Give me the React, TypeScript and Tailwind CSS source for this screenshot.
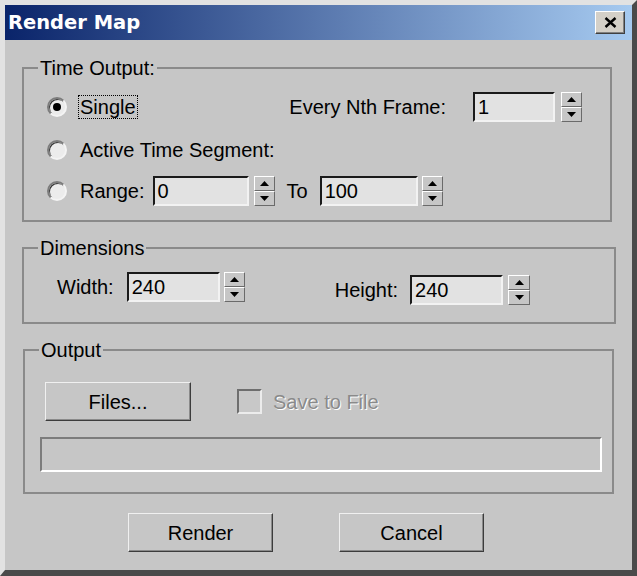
import type { ReactNode } from "react";

function Radio({ checked = false }: { checked?: boolean }) {
  return (
    <span className="ml-[23px] flex h-[20px] w-[20px] shrink-0 items-center justify-center rounded-full border-2 border-t-[#7c7c7c] border-l-[#7c7c7c] border-b-[#f4f4f4] border-r-[#f4f4f4] bg-[#ececec] shadow-[inset_1px_1px_0_#3a3a3a]">
      {checked && <span className="h-[8px] w-[8px] rounded-full bg-black" />}
    </span>
  );
}

function Arrow({ down = false }: { down?: boolean }) {
  return (
    <svg width="9" height="5" viewBox="0 0 9 5">
      <polygon points={down ? "0,0 9,0 4.5,5" : "4.5,0 9,5 0,5"} fill="#000" />
    </svg>
  );
}

function Spinner({ className = "" }: { className?: string }) {
  return (
    <div className={`flex h-[30px] w-[21px] shrink-0 flex-col ${className}`}>
      <div className="flex flex-1 items-center justify-center border border-t-white border-l-white border-b-[#6a6a6a] border-r-[#6a6a6a]">
        <Arrow />
      </div>
      <div className="flex flex-1 items-center justify-center border border-t-white border-l-white border-b-[#6a6a6a] border-r-[#6a6a6a]">
        <Arrow down />
      </div>
    </div>
  );
}

// sunken edit box + spinner pair
function NumField({
  value,
  inputClass,
  spinClass,
}: {
  value: string;
  inputClass: string;
  spinClass: string;
}) {
  return (
    <>
      <div
        className={`flex h-[30px] shrink-0 items-center border-2 border-t-[#1a1a1a] border-l-[#1a1a1a] border-b-[#f2f2f2] border-r-[#f2f2f2] bg-[#e2e2e2] pl-[3px] ${inputClass}`}
      >
        {value}
      </div>
      <Spinner className={spinClass} />
    </>
  );
}

function Button({ label, className = "" }: { label: string; className?: string }) {
  return (
    <button
      type="button"
      className={`flex h-[39px] w-[145px] shrink-0 items-center justify-center border border-t-[#f0f0f0] border-l-[#f0f0f0] border-b-[#3c3c3c] border-r-[#3c3c3c] bg-[#c6c6c6] shadow-[inset_-1px_-1px_0_#8a8a8a] ${className}`}
    >
      {label}
    </button>
  );
}

function Group({
  label,
  className,
  children,
}: {
  label: string;
  className: string;
  children: ReactNode;
}) {
  return (
    <fieldset className={`border-2 border-[#8a8a8a] ${className}`}>
      <legend className="ml-[14px] px-[2px] leading-[20px]">{label}</legend>
      {children}
    </fieldset>
  );
}

export default function App() {
  return (
    <div className="flex h-[576px] w-[637px] flex-col border-t-[5px] border-l-[5px] border-r-[5px] border-b-[6px] border-t-[#e2e2e2] border-l-[#e2e2e2] border-r-[#4a4a4a] border-b-[#4a4a4a] bg-[#c6c6c6] font-['Liberation_Sans',Arial,sans-serif] text-[20px] leading-[20px] text-black">
      {/* title bar */}
      <div className="flex h-[35px] shrink-0 items-center bg-[linear-gradient(to_right,#0a246a,#a6caf0)]">
        <span className="pl-[3px] font-['DejaVu_Sans',sans-serif] text-[19.5px] font-bold text-white">
          Render Map
        </span>
        <div className="mr-[7px] ml-auto flex h-[23px] w-[30px] items-center justify-center border border-t-white border-l-white border-b-[#404040] border-r-[#404040] bg-[#d4d0c8] shadow-[inset_-1px_-1px_0_#808080]">
          <svg width="13" height="11" viewBox="0 0 13 11">
            <path d="M1.5 1 L11.5 10 M11.5 1 L1.5 10" stroke="#000" strokeWidth="2.4" />
          </svg>
        </div>
      </div>

      <div className="flex flex-1 flex-col">
        <Group label="Time Output:" className="mt-[18px] ml-[17px] mr-[20px]">
          <div className="mt-[14px] flex h-[30px] items-center">
            <Radio checked />
            <span className="ml-[11px] border border-dotted border-black px-px leading-[22px]">
              Single
            </span>
            <span className="ml-auto">Every Nth Frame:</span>
            <NumField value="1" inputClass="ml-[27px] w-[82px]" spinClass="ml-[6px] mr-[28px]" />
          </div>
          <div className="mt-[13px] flex h-[30px] items-center">
            <Radio />
            <span className="ml-[13px]">Active Time Segment:</span>
          </div>
          <div className="mt-[11px] mb-[14px] flex h-[30px] items-center">
            <Radio />
            <span className="ml-[13px]">Range:</span>
            <NumField value="0" inputClass="ml-[8px] w-[96px]" spinClass="ml-[5px]" />
            <span className="ml-[12px]">To</span>
            <NumField value="100" inputClass="ml-[12px] w-[98px]" spinClass="ml-[4px]" />
          </div>
        </Group>

        <Group label="Dimensions" className="mt-[16px] ml-[17px] mr-[16px]">
          <div className="mt-[14px] mb-[20px] flex h-[30px] items-center">
            <span className="ml-[33px]">Width:</span>
            <NumField value="240" inputClass="ml-[13px] w-[93px]" spinClass="ml-[4px]" />
            <div className="mt-[6px] ml-[90px] flex items-center">
              <span>Height:</span>
              <NumField value="240" inputClass="ml-[12px] w-[93px]" spinClass="ml-[5px] w-[22px]" />
            </div>
          </div>
        </Group>

        <Group label="Output" className="mt-[16px] ml-[18px] mr-[18px]">
          <div className="mt-[22px] flex h-[39px] items-center">
            <Button label="Files..." className="ml-[20px] w-[146px]" />
            <span className="ml-[46px] h-[25px] w-[25px] shrink-0 border-2 border-t-[#6e6e6e] border-l-[#6e6e6e] border-b-[#ececec] border-r-[#ececec] bg-[#c8c8c8]" />
            <span className="ml-[11px] text-[#8a8a8a] [text-shadow:1px_1px_0_#ffffff]">
              Save to File
            </span>
          </div>
          <div className="mt-[16px] mb-[20px] ml-[15px] mr-[10px] h-[35px] border-2 border-t-[#7c7c7c] border-l-[#7c7c7c] border-b-white border-r-white" />
        </Group>

        <div className="mt-[19px] flex">
          <Button label="Render" className="ml-[123px]" />
          <Button label="Cancel" className="ml-[66px]" />
        </div>
      </div>
    </div>
  );
}
